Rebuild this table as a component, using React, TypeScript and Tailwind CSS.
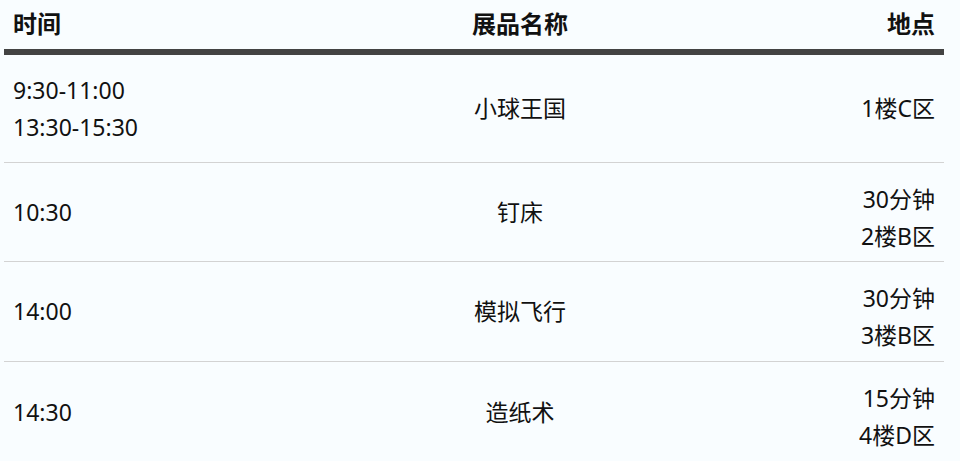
const rows = [
  { time: ["9:30-11:00", "13:30-15:30"], name: "小球王国", place: ["1楼C区"], h: "h-[108px]" },
  { time: ["10:30"], name: "钉床", place: ["30分钟", "2楼B区"], h: "h-[99px]" },
  { time: ["14:00"], name: "模拟飞行", place: ["30分钟", "3楼B区"], h: "h-[100px]" },
  { time: ["14:30"], name: "造纸术", place: ["15分钟", "4楼D区"], h: "h-[100px]" },
]

export default function App() {
  return (
    <div className="min-h-screen bg-[#f9fdff] px-[4px] pr-[16px] font-['Noto_Sans','Noto_Sans_CJK_SC',sans-serif] text-[#111]">
      <div className="grid h-[55px] grid-cols-[291px_432px_1fr] items-center border-b-[6px] border-[#434343] px-[9px] pb-[1px] text-[24px] font-bold">
        <div>时间</div>
        <div className="text-center">展品名称</div>
        <div className="text-right">地点</div>
      </div>
      {rows.map((row, i) => (
        <div
          key={row.name}
          className={`grid grid-cols-[291px_432px_1fr] px-[9px] text-[23px] leading-[37px] ${row.h} ${i < rows.length - 1 ? "border-b border-[#d3d3d3]" : ""}`}
        >
          <div className="flex flex-col justify-center">
            {row.time.map((t) => (
              <div key={t}>{t}</div>
            ))}
          </div>
          <div className="flex items-center justify-center">{row.name}</div>
          <div className={`flex flex-col items-end ${row.place.length > 1 ? "pt-[18px]" : "justify-center"}`}>
            {row.place.map((p) => (
              <div key={p}>{p}</div>
            ))}
          </div>
        </div>
      ))}
    </div>
  )
}
